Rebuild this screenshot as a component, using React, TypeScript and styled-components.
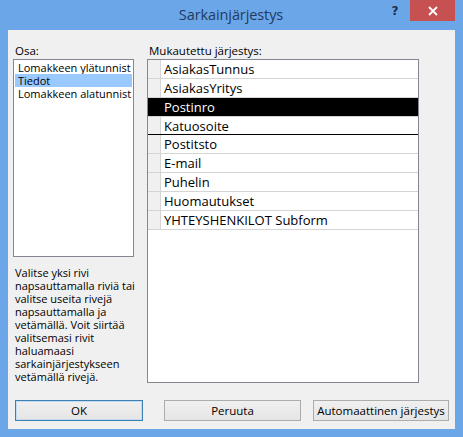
import React from "react";
import styled, { createGlobalStyle } from "styled-components";

const GlobalStyle = createGlobalStyle`
  html, body {
    margin: 0;
    padding: 0;
    background: #6ba6e8;
  }
  * {
    box-sizing: border-box;
  }
`;

const uiFont = `"Open Sans", "Noto Sans", "Liberation Sans", sans-serif`;

const Frame = styled.div`
  width: 463px;
  height: 437px;
  background: #6ba6e8;
  display: flex;
  flex-direction: column;
  padding: 0 8px 8px 8px;
  font-family: ${uiFont};
  color: #000;
`;

const TitleBar = styled.div`
  height: 30px;
  display: grid;
  grid-template-columns: 1fr auto 1fr;
  align-items: start;
  margin: 0 -7px 0 -8px;
`;

const Title = styled.div`
  grid-column: 2;
  font-size: 14.5px;
  line-height: 30px;
  color: #1f3b5f;
  letter-spacing: -0.1px;
`;

const CaptionButtons = styled.div`
  grid-column: 3;
  justify-self: end;
  display: flex;
  align-items: flex-start;
`;

const HelpButton = styled.div`
  width: 30px;
  height: 21px;
  display: flex;
  align-items: center;
  justify-content: center;
  font-family: "DejaVu Sans", sans-serif;
  font-weight: bold;
  font-size: 12px;
  color: #1c2f4a;
  padding-top: 1px;
`;

const CloseButton = styled.div`
  width: 45px;
  height: 21px;
  background: #c75050;
  display: flex;
  align-items: center;
  justify-content: center;
  margin-right: 7px;
`;

const Client = styled.div`
  flex: 1;
  background: #f0f0f0;
  display: flex;
  flex-direction: column;
  padding: 13px 0 0 0;
`;

const Body = styled.div`
  display: flex;
  height: 340px;
`;

const LeftCol = styled.div`
  width: 139px;
  padding-left: 5px;
  display: flex;
  flex-direction: column;
`;

const RightCol = styled.div`
  width: 272px;
  display: flex;
  flex-direction: column;
`;

const Label = styled.div`
  font-size: 11.5px;
  line-height: 15px;
  height: 16px;
  padding-left: 2px;
`;

const ListBox = styled.div`
  width: 121px;
  height: 199px;
  background: #fff;
  border: 1px solid #828790;
  padding: 1px 1px;
`;

const ListItem = styled.div<{ $selected?: boolean }>`
  font-size: 11px;
  line-height: 13px;
  height: 13px;
  padding-left: 3px;
  white-space: nowrap;
  overflow: hidden;
  background: ${(p) => (p.$selected ? "#99c9ff" : "transparent")};
`;

const Help = styled.div`
  margin-top: 9px;
  font-size: 11px;
  line-height: 13px;
  padding-left: 2px;
`;

const Grid = styled.div`
  height: 325px;
  background: #fff;
  border: 1px solid #828790;
  display: flex;
  flex-direction: column;
`;

const Row = styled.div<{ $selected?: boolean; $dropBelow?: boolean }>`
  display: flex;
  height: 19px;
  border-bottom: ${(p) => (p.$dropBelow ? "2px solid #000" : "1px solid #d5d5d5")};
  margin-bottom: ${(p) => (p.$dropBelow ? "-1px" : "0")};
  background: ${(p) => (p.$selected ? "#000" : "#fff")};
  color: ${(p) => (p.$selected ? "#fff" : "#000")};
`;

const Selector = styled.div<{ $selected?: boolean }>`
  width: 13px;
  flex: none;
  background: ${(p) => (p.$selected ? "#000" : "#f0f0f0")};
  border-right: 1px solid ${(p) => (p.$selected ? "#000" : "#d5d5d5")};
`;

const Cell = styled.div`
  flex: 1;
  font-size: 13px;
  line-height: 18px;
  padding-left: 3px;
  white-space: nowrap;
`;

const ButtonRow = styled.div`
  display: flex;
  padding-left: 7px;
  margin-top: 17px;
`;

const Button = styled.button<{ $width: number; $gap?: number; $default?: boolean }>`
  width: ${(p) => p.$width}px;
  margin-left: ${(p) => p.$gap ?? 0}px;
  height: 21px;
  font-family: ${uiFont};
  font-size: 11.5px;
  color: #000;
  padding: 0;
  border: 1px solid ${(p) => (p.$default ? "#3c7fb1" : "#acacac")};
  box-shadow: ${(p) => (p.$default ? "inset 0 0 0 1px #c4dcf3" : "none")};
  background: linear-gradient(#f0f0f0, #e5e5e5);
  border-radius: 0;
`;

const fields = [
  "AsiakasTunnus",
  "AsiakasYritys",
  "Postinro",
  "Katuosoite",
  "Postitsto",
  "E-mail",
  "Puhelin",
  "Huomautukset",
  "YHTEYSHENKILOT Subform",
];

const sections = ["Lomakkeen ylätunnist", "Tiedot", "Lomakkeen alatunnist"];

export default function App() {
  return (
    <>
      <GlobalStyle />
      <Frame>
        <TitleBar>
          <Title>Sarkainjärjestys</Title>
          <CaptionButtons>
            <HelpButton>?</HelpButton>
            <CloseButton>
              <svg width="10" height="10" viewBox="0 0 10 10">
                <path d="M1 1 L9 9 M9 1 L1 9" stroke="#fff" strokeWidth="1.8" />
              </svg>
            </CloseButton>
          </CaptionButtons>
        </TitleBar>
        <Client>
          <Body>
            <LeftCol>
              <Label>Osa:</Label>
              <ListBox>
                {sections.map((s, i) => (
                  <ListItem key={s} $selected={i === 1}>
                    {s}
                  </ListItem>
                ))}
              </ListBox>
              <Help>
                Valitse yksi rivi
                <br />
                napsauttamalla riviä tai
                <br />
                valitse useita rivejä
                <br />
                napsauttamalla ja
                <br />
                vetämällä. Voit siirtää
                <br />
                valitsemasi rivit
                <br />
                haluamaasi
                <br />
                sarkainjärjestykseen
                <br />
                vetämällä rivejä.
              </Help>
            </LeftCol>
            <RightCol>
              <Label>Mukautettu järjestys:</Label>
              <Grid>
                {fields.map((f, i) => (
                  <Row key={f} $selected={i === 2} $dropBelow={i === 3}>
                    <Selector $selected={i === 2} />
                    <Cell>{f}</Cell>
                  </Row>
                ))}
              </Grid>
            </RightCol>
          </Body>
          <ButtonRow>
            <Button $width={128} $default>
              OK
            </Button>
            <Button $width={137} $gap={21}>
              Peruuta
            </Button>
            <Button $width={136} $gap={12}>
              Automaattinen järjestys
            </Button>
          </ButtonRow>
        </Client>
      </Frame>
    </>
  );
}
